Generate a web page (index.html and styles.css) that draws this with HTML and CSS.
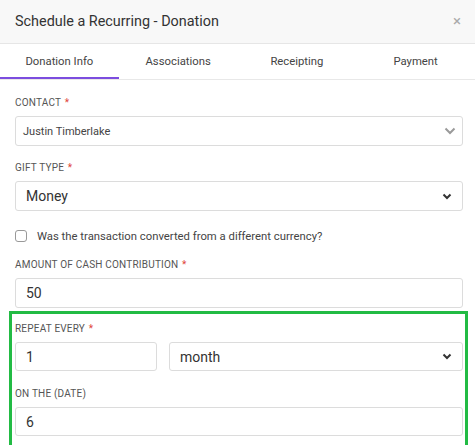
FILE: index.html
```html
<!DOCTYPE html>
<html lang="en">
<head>
<meta charset="utf-8">
<title>Schedule a Recurring - Donation</title>
<link rel="stylesheet" href="styles.css">
</head>
<body>
<div class="modal">
  <div class="modal-header">
    <h1 class="modal-title">Schedule a Recurring - Donation</h1>
    <span class="close">&times;</span>
  </div>
  <nav class="tabs">
    <div class="tab active">Donation Info</div>
    <div class="tab">Associations</div>
    <div class="tab">Receipting</div>
    <div class="tab">Payment</div>
  </nav>
  <div class="form">
    <div class="field first">
      <div class="label">CONTACT <span class="req">*</span></div>
      <div class="control select2">
        <span class="value small">Justin Timberlake</span>
        <svg class="chev light" viewBox="0 0 12 8" width="12" height="8"><path d="M1.5 1.5 6 6l4.5-4.5" fill="none" stroke="currentColor" stroke-width="2"/></svg>
      </div>
    </div>
    <div class="field">
      <div class="label">GIFT TYPE <span class="req">*</span></div>
      <div class="control native">
        <span class="value">Money</span>
        <svg class="chev dark" viewBox="0 0 10 7" width="10" height="7"><path d="M1.5 1.5 5 5l3.5-3.5" fill="none" stroke="currentColor" stroke-width="2"/></svg>
      </div>
    </div>
    <label class="check-row">
      <span class="checkbox"></span>
      <span class="check-text">Was the transaction converted from a different currency?</span>
    </label>
    <div class="field amount">
      <div class="label">AMOUNT OF CASH CONTRIBUTION <span class="req">*</span></div>
      <div class="control native"><span class="value">50</span></div>
    </div>
    <div class="highlight">
      <div class="label">REPEAT EVERY <span class="req">*</span></div>
      <div class="repeat-row">
        <div class="control native short"><span class="value">1</span></div>
        <div class="control native short">
          <span class="value">month</span>
          <svg class="chev dark" viewBox="0 0 10 7" width="10" height="7"><path d="M1.5 1.5 5 5l3.5-3.5" fill="none" stroke="currentColor" stroke-width="2"/></svg>
        </div>
      </div>
      <div class="label date-label">ON THE (DATE)</div>
      <div class="control native short"><span class="value">6</span></div>
    </div>
  </div>
</div>
</body>
</html>
```
FILE: styles.css
```css
* { box-sizing: border-box; }
html, body { margin: 0; padding: 0; background: #fff; }
body { font-family: Roboto, "Noto Sans", Arial, sans-serif; color: #333; }

.modal { width: 475px; }

.modal-header {
  height: 44px;
  background: #f8f8f8;
  border-bottom: 1px solid #e6e6e6;
  display: flex;
  align-items: center;
  justify-content: space-between;
  padding: 0 14px 0 15px;
}
.modal-title {
  margin: 0;
  font-size: 14.4px;
  font-weight: 400;
  color: #333;
}
.close { font-size: 15px; color: #aaa; line-height: 1; }

.tabs {
  display: grid;
  grid-template-columns: repeat(4, 1fr);
  height: 36px;
  border-bottom: 1px solid #e8e8e8;
}
.tab {
  display: flex;
  align-items: center;
  justify-content: center;
  font-size: 11.3px;
  color: #444;
}
.tab.active { box-shadow: inset 0 -2px 0 #7c4ddf; }

.form { padding: 0 12px 0 15px; }

.label {
  font-size: 10px;
  line-height: 14px;
  color: #555;
  letter-spacing: 0.2px;
}
.req { color: #e0443a; margin-left: 1px; }

.field { margin-top: 15px; }
.field.first { margin-top: 16px; }
.field .label { margin-bottom: 6px; }

.control {
  height: 30px;
  border: 1px solid #dcdcdc;
  border-radius: 3px;
  display: flex;
  align-items: center;
  justify-content: space-between;
  padding: 0 10px 0 10px;
  background: #fff;
}
.control.select2 { padding-left: 7px; padding-right: 6px; }
.control.native { height: 30px; }
.control.short { height: 29px; }
.value { font-size: 14px; color: #333; }
.value.small { font-size: 11px; color: #444; }
.chev.light { color: #9a9a9a; }
.chev.dark { color: #333; }

.check-row {
  display: flex;
  align-items: center;
  margin-top: 17px;
  height: 16px;
}
.checkbox {
  width: 12px;
  height: 12px;
  border: 1px solid #999;
  border-radius: 3px;
  margin-right: 10px;
}
.check-text { font-size: 11.3px; color: #444; }

.field.amount { margin-top: 14px; }

.highlight {
  margin: 3px -5px 0 -6px;
  border: 3px solid #22bb44;
  padding: 8px 2px 9px 3px;
}
.highlight .label { margin-bottom: 6px; }
.repeat-row {
  display: grid;
  grid-template-columns: 142px 1fr;
  gap: 12px;
}
.date-label { margin-top: 16px; }
```
